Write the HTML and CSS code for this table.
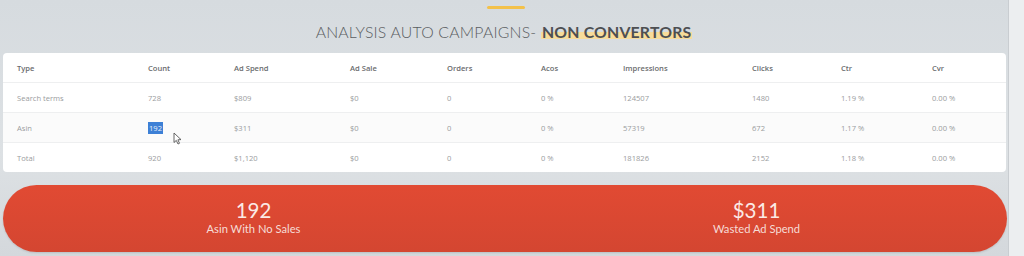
FILE: index.html
```html
<!DOCTYPE html>
<html>
<head>
<meta charset="utf-8">
<link rel="stylesheet" href="styles.css">
</head>
<body>
<div class="screen">
  <div class="panel">
    <div class="accent"></div>
    <h1 class="title">ANALYSIS AUTO CAMPAIGNS- <span class="hl">NON CONVERTORS</span></h1>
    <div class="card">
      <div class="row head">
        <div>Type</div><div>Count</div><div>Ad Spend</div><div>Ad Sale</div><div>Orders</div><div>Acos</div><div>Impressions</div><div>Clicks</div><div>Ctr</div><div>Cvr</div>
      </div>
      <div class="row">
        <div>Search terms</div><div>728</div><div>$809</div><div>$0</div><div>0</div><div>0 %</div><div>124507</div><div>1480</div><div>1.19 %</div><div>0.00 %</div>
      </div>
      <div class="row alt">
        <div>Asin</div><div><span class="sel">192</span></div><div>$311</div><div>$0</div><div>0</div><div>0 %</div><div>57319</div><div>672</div><div>1.17 %</div><div>0.00 %</div>
      </div>
      <div class="row last">
        <div>Total</div><div>920</div><div>$1,120</div><div>$0</div><div>0</div><div>0 %</div><div>181826</div><div>2152</div><div>1.18 %</div><div>0.00 %</div>
      </div>
      <svg class="cursor" width="9" height="13" viewBox="0 0 9 13"><path d="M1 1 L1 10.5 L3.3 8.4 L5 12 L6.5 11.3 L4.9 7.8 L8 7.6 Z" fill="#fff" stroke="#555" stroke-width="0.9" stroke-linejoin="round"/></svg>
    </div>
    <div class="pill">
      <div class="stat"><div class="num">192</div><div class="lbl">Asin With No Sales</div></div>
      <div class="stat"><div class="num">$311</div><div class="lbl">Wasted Ad Spend</div></div>
    </div>
  </div>
  <div class="side"></div>
</div>
</body>
</html>
```
FILE: styles.css
```css
html, body {
  margin: 0;
  padding: 0;
}
body {
  width: 1024px;
  height: 256px;
  overflow: hidden;
  background: #d9dde1;
}
.screen {
  display: flex;
  height: 256px;
}
.panel {
  width: 1008px;
  height: 256px;
  background: linear-gradient(#d6dbdf, #dde1e4 60%, #d4d8dc);
  display: flex;
  flex-direction: column;
  align-items: stretch;
}
.side {
  width: 15px;
  border-left: 1px solid #c9cdd1;
  background: #eceef0;
}
.accent {
  align-self: center;
  width: 38px;
  height: 3px;
  border-radius: 2px;
  background: #f3c14a;
  margin: 6px 0 0 4px;
}
.title {
  margin: 10px 0 0 0;
  text-align: center;
  font-family: "Lato", "Open Sans", sans-serif;
  font-weight: 300;
  font-size: 15.8px;
  line-height: 26px;
  letter-spacing: 0.2px;
  color: #5a5d60;
}
.hl {
  font-weight: 700;
  color: #4d4f52;
  background: linear-gradient(transparent 55%, #f7dc9a 55%, #f7dc9a 92%, transparent 92%);
  padding: 0 1px;
}
.card {
  position: relative;
  margin: 8px 2px 0 3px;
  background: #fff;
  border-radius: 4px;
  font-family: "Open Sans", sans-serif;
  font-size: 7.6px;
  color: #9a9c9e;
}
.row {
  display: grid;
  grid-template-columns: 131px 86px 116px 97px 94px 82px 129px 89px 91px 1fr;
  align-items: center;
  height: 29px;
  padding-left: 14px;
  border-bottom: 1px solid #eeeff0;
}
.row.alt {
  background: #fbfbfb;
}
.row.last {
  border-bottom: none;
}
.row.head {
  color: #6a6c6e;
  font-weight: 600;
}
.sel {
  background: #3d80d6;
  color: #e8f0fb;
  padding: 1px 1px;
}
.cursor {
  position: absolute;
  left: 170px;
  top: 79px;
}
.pill {
  margin: 13px 1px 0 3px;
  height: 67px;
  border-radius: 34px;
  background: linear-gradient(#e14a33, #d44631);
  display: flex;
  color: #fff;
  font-family: "Lato", "Open Sans", sans-serif;
  box-shadow: 0 1px 2px rgba(0,0,0,0.12);
}
.stat {
  flex: 1;
  display: flex;
  flex-direction: column;
  align-items: center;
  justify-content: center;
  padding-bottom: 4px;
}
.stat:first-child {
  padding-right: 2px;
}
.num {
  font-size: 20.5px;
  font-weight: 400;
  line-height: 24px;
  color: #fbeae6;
}
.lbl {
  font-size: 11.2px;
  line-height: 14px;
  color: #f6dcd6;
}
```
